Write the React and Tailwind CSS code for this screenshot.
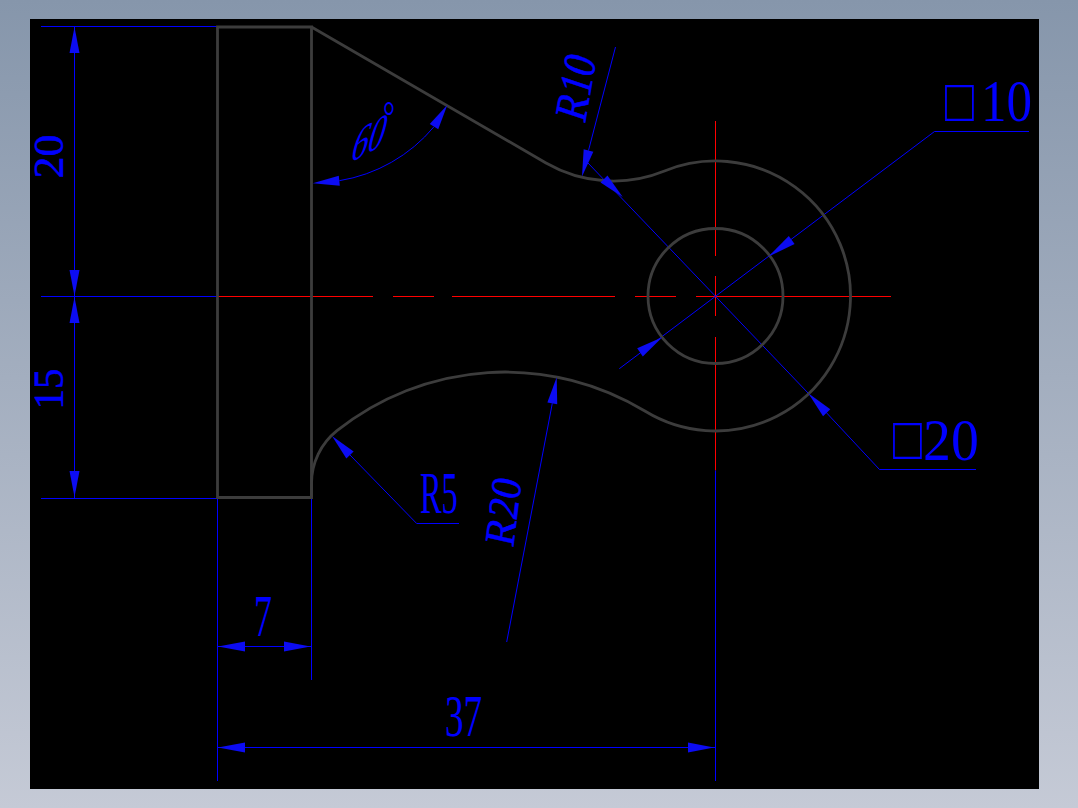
import React from "react";

const BLUE = "#0000ff";
const RED = "#ff0000";
const GREY = "#3c3c3c";

// filled dimension arrowhead, wide end at base, point at tip
const Arrow = ({ tip, base }) => {
  const dx = tip[0] - base[0];
  const dy = tip[1] - base[1];
  const len = Math.hypot(dx, dy);
  const nx = (-dy / len) * 5;
  const ny = (dx / len) * 5;
  const points = `${tip[0]},${tip[1]} ${base[0] + nx},${base[1] + ny} ${base[0] - nx},${base[1] - ny}`;
  return <polygon points={points} fill="#0c0cf2" />;
};

const Line = ({ d, color = BLUE, width = 1 }) => (
  <path d={d} fill="none" stroke={color} strokeWidth={width} />
);

// dimension labels are squeezed and rotated the way the CAD text is
const Label = ({ transform, bold, children }) => (
  <text
    transform={transform}
    fontSize="60"
    fill={BLUE}
    stroke={bold ? BLUE : "none"}
    strokeWidth={bold ? 0.7 : 0}
  >
    {children}
  </text>
);

const arrows = [
  { tip: [74.5, 27], base: [74.5, 53] },
  { tip: [74.5, 296], base: [74.5, 270] },
  { tip: [74.5, 297], base: [74.5, 323] },
  { tip: [74.5, 497], base: [74.5, 471] },
  { tip: [218, 646.5], base: [245, 646.5] },
  { tip: [310.5, 646.5], base: [284, 646.5] },
  { tip: [218, 747.5], base: [245, 747.5] },
  { tip: [714, 747.5], base: [688, 747.5] },
  { tip: [312.7, 183.3], base: [339.3, 180.7] },
  { tip: [447.3, 105], base: [434, 126.7] },
  { tip: [582, 176.5], base: [588.5, 150.5] },
  { tip: [622.7, 197], base: [604, 179] },
  { tip: [768.3, 256.7], base: [791.7, 240] },
  { tip: [662.3, 337.3], base: [640, 352.3] },
  { tip: [808.3, 393.3], base: [826.7, 412.7] },
  { tip: [332, 436], base: [350, 455] },
  { tip: [556.7, 377.3], base: [552.3, 403.3] },
];

const Drawing = () => (
  <svg viewBox="30 19 1009 770" className="block h-full w-full font-['Liberation_Serif',serif]">
    {/* center lines */}
    <Line d="M217.5 296.5H373M393 296.5H434M452 296.5H615M635 296.5H676M696 296.5H891" color={RED} />
    <Line d="M715.5 121V256M715.5 276V316M715.5 337V470.5" color={RED} />

    {/* extension lines */}
    <Line d="M41 26.5H217M41 296.5H217M41 498.5H217" />
    <Line d="M217.5 498V781M311.5 498V680M715.5 470.5V781" />

    {/* dimension lines */}
    <Line d="M74.5 27V498M218 646.5H311M218 747.5H715" />
    <Line d="M339.3 180.7A156 156 0 0 0 434 126.7" />
    <Line d="M615.5 47L588.5 150.5M588 163L808.3 393.3L879.5 469.5H976" />
    <Line d="M619.3 368.7L934.5 131.5H1029" />
    <Line d="M350 455L416.7 523.5H459M552.3 403.3L506.7 642" />

    {/* part outline */}
    <Line d="M217.5 27H311.5V497.5H217.5Z" color={GREY} width={2.8} />
    <Line
      d="M311.5 27L546 163A135 135 0 0 0 664.5 171A135 135 0 1 1 645.3 411.3A270 270 0 0 0 337 430.7A67.5 67.5 0 0 0 311.5 483.5V497.5"
      color={GREY}
      width={2.8}
    />
    <circle cx="715.5" cy="296" r="67.5" fill="none" stroke={GREY} strokeWidth="2.8" />

    {arrows.map((a, idx) => (
      <Arrow key={idx} tip={a.tip} base={a.base} />
    ))}

    <Label bold transform="translate(63 178.5) rotate(-90) scale(.73 .69)">20</Label>
    <Label bold transform="translate(63 409.5) rotate(-90) scale(.68 .69)">15</Label>
    <Label transform="translate(254 635.5) scale(.6 1)">7</Label>
    <Label transform="translate(445 736) scale(.62 1)">37</Label>
    <Label transform="translate(420 513) scale(.54 1)">R5</Label>
    <Label bold transform="matrix(.083 -.667 .698 .164 513.3 548)">R20</Label>
    <Label bold transform="matrix(.11 -.64 .739 .246 585 124)">R10</Label>
    <Label transform="matrix(.55 -.3 -.25 .86 348.4 163.7)">60</Label>
    <Label transform="translate(383 130) scale(.5 .7)">°</Label>
    <Label transform="translate(945 121) scale(.8 1)">□</Label>
    <Label transform="translate(981 121) scale(.85 1)">10</Label>
    <Label transform="translate(893 458.5) scale(.8 1)">□</Label>
    <Label transform="translate(923 460) scale(.93 1)">20</Label>
  </svg>
);

export default function App() {
  return (
    <div className="h-[808px] w-[1078px] bg-linear-to-b from-[#8696ab] to-[#c5cad6] pl-[30px] pt-[19px]">
      <div className="h-[770px] w-[1009px] bg-black">
        <Drawing />
      </div>
    </div>
  );
}
